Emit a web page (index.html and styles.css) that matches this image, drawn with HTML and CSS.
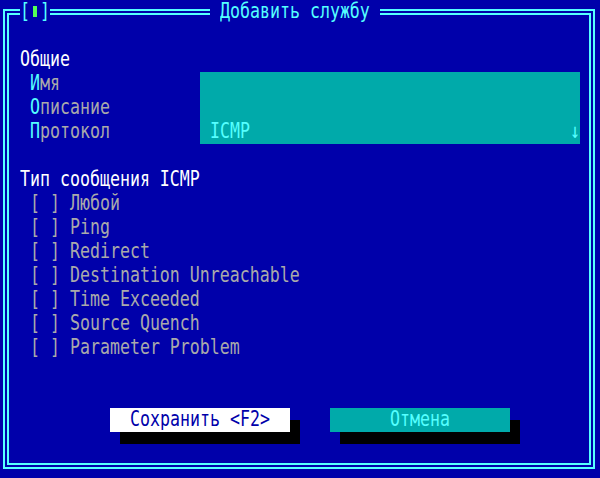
FILE: index.html
```html
<!DOCTYPE html>
<html>
<head>
  <title>Добавить службу</title>
  <link rel="stylesheet" href="styles.css">
</head>
<body>
  <div class="window">
    <div class="close"><span class="tall">[</span><span class="close-mark"></span><span class="tall">]</span></div>
    <div class="title"><span class="tall">Добавить службу</span></div>

    <div class="heading tall">Общие</div>
    <div class="fields">
      <div class="label tall"><span class="hot">И</span>мя</div>
      <div class="value"></div>
      <div class="label tall"><span class="hot">О</span>писание</div>
      <div class="value"></div>
      <div class="label tall"><span class="hot">П</span>ротокол</div>
      <div class="value"><span class="tall">ICMP</span><span class="tall">↓</span></div>
    </div>

    <div class="heading section tall">Тип сообщения ICMP</div>
    <div class="checks">
      <div class="check tall">[ ] Любой</div>
      <div class="check tall">[ ] Ping</div>
      <div class="check tall">[ ] Redirect</div>
      <div class="check tall">[ ] Destination Unreachable</div>
      <div class="check tall">[ ] Time Exceeded</div>
      <div class="check tall">[ ] Source Quench</div>
      <div class="check tall">[ ] Parameter Problem</div>
    </div>

    <div class="buttons">
      <button class="button button-default"><span class="tall">Сохранить &lt;F2&gt;</span></button>
      <button class="button button-cancel"><span class="tall">Отмена</span></button>
    </div>
  </div>
</body>
</html>
```

FILE: styles.css
```css
body {
  margin: 0;
  width: 600px;
  height: 478px;
  overflow: hidden;
  background-color: #0000aa;
  color: #aaaaaa;
  font-family: "DejaVu Sans Mono", monospace;
  font-size: 16.6px;
  line-height: 24px;
}
.tall {
  display: block;
  transform: scaleY(1.25);
}
span.tall {
  display: inline-block;
}
.window {
  position: relative;
  box-sizing: border-box;
  width: 592px;
  height: 460px;
  margin: 9px 0 0 3px;
  border: 6px double #55ffff;
  padding: 33px 0 0 11px;
}
.close {
  position: absolute;
  top: -15px;
  left: 11px;
  display: flex;
  height: 24px;
  background-color: #0000aa;
  color: #55ffff;
}
.close-mark {
  width: 4px;
  height: 11px;
  margin: 6px 3px 0;
  background-color: #55ff55;
}
.title {
  position: absolute;
  top: -15px;
  left: 201px;
  height: 24px;
  padding: 0 10px;
  background-color: #0000aa;
  color: #55ffff;
}
.heading {
  color: #ffffff;
}
.section {
  margin-top: 24px;
}
.fields {
  display: grid;
  grid-template-columns: 180px 380px;
}
.label {
  padding-left: 10px;
}
.hot {
  color: #55ffff;
}
.value {
  display: flex;
  justify-content: space-between;
  height: 24px;
  padding-left: 10px;
  background-color: #00aaaa;
  color: #55ffff;
}
.checks {
  padding-left: 10px;
}
.check {
  height: 24px;
  white-space: pre;
}
.buttons {
  display: flex;
  gap: 40px;
  margin-top: 48px;
  padding-left: 90px;
}
.button {
  width: 180px;
  height: 24px;
  padding: 0;
  border: none;
  font: inherit;
  line-height: 24px;
  text-align: center;
  box-shadow: 10px 12px 0 #000000;
}
.button-default {
  background-color: #ffffff;
  color: #0000aa;
}
.button-cancel {
  background-color: #00aaaa;
  color: #55ffff;
}
```
